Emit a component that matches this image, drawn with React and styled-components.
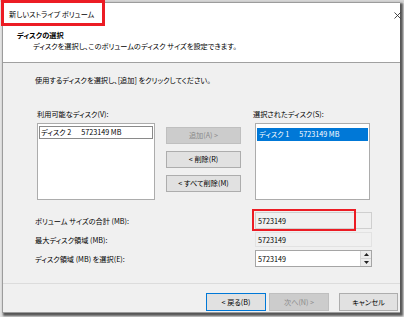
import React from "react";
import styled, { createGlobalStyle } from "styled-components";

const Global = createGlobalStyle`
  body {
    margin: 0;
    background: #e4e4e4;
    font-family: "Noto Sans CJK JP", "Noto Sans", sans-serif;
    font-size: 7.2px;
    font-feature-settings: "palt";
    color: #000;
  }
`;

const Page = styled.div`
  position: relative;
  width: 404px;
  height: 317px;
  overflow: hidden;
  padding: 2px 0 0 2px;
  box-sizing: border-box;
  background: linear-gradient(180deg, #d6d6d6 0, #d6d6d6 2px, #e4e4e4 2px);
`;

const Window = styled.div`
  position: relative;
  width: 398px;
  height: 311px;
  box-sizing: border-box;
  border: 1px solid #9c9c9c;
  border-right: none;
  background: #f0f0f0;
  display: flex;
  flex-direction: column;
  box-shadow: 2px 2px 2px 1px rgba(40, 40, 40, 0.75);
`;

const Header = styled.div`
  position: relative;
  height: 60px;
  box-sizing: border-box;
  background: #fff;
  border-bottom: 1px solid #a0a0a0;
  padding: 5px 0 0 6px;
  line-height: 12px;
  flex-shrink: 0;
`;

const Title = styled.div`
  height: 12px;
`;

const Heading = styled.div`
  margin: 9px 0 0 8px;
  font-weight: bold;
`;

const Sub = styled.div`
  margin-left: 24px;
  line-height: 11px;
`;

const Close = styled.svg`
  position: absolute;
  right: -1px;
  top: 9px;
`;

const Annotation = styled.div`
  position: absolute;
  left: ${(p) => p.x}px;
  top: ${(p) => p.y}px;
  width: ${(p) => p.w}px;
  height: ${(p) => p.h}px;
  box-sizing: border-box;
  border: ${(p) => p.t}px solid #ec1c24;
  pointer-events: none;
`;

const Body = styled.div`
  flex: 1;
  padding: 11px 0 0 32px;
  line-height: 12px;
`;

const Lists = styled.div`
  display: grid;
  grid-template-columns: 118px 75px 118px;
  grid-template-rows: 12px 77px;
  column-gap: 11px;
  row-gap: 3px;
  margin: 22px 0 0 2px;
`;

const Label = styled.div`
  grid-column: ${(p) => p.col};
  white-space: nowrap;
`;

const ListBox = styled.div`
  grid-column: ${(p) => p.col};
  grid-row: 2;
  background: #fff;
  border: 1px solid #acacac;
  box-sizing: border-box;
  padding: 1px;
  ${(p) => (p.col === 3 ? "margin-left: 3px;" : "")}
`;

const Item = styled.div`
  display: flex;
  height: 11px;
  line-height: 11px;
  padding-left: 1px;
  margin-top: ${(p) => (p.selected ? 3 : 1)}px;
  border: 1px solid ${(p) => (p.selected ? "#0078d7" : "#8a8a8a")};
  background: ${(p) => (p.selected ? "#0078d7" : "#fff")};
  color: ${(p) => (p.selected ? "#fff" : "#000")};
  white-space: nowrap;
  box-sizing: content-box;
`;

const Size = styled.span`
  margin-left: 10px;
`;

const Buttons = styled.div`
  grid-column: 2;
  grid-row: 2;
  display: flex;
  flex-direction: column;
  gap: 7px;
  padding-top: 4px;
`;

const Button = styled.button`
  width: ${(p) => p.w || 75}px;
  height: ${(p) => p.h || 17}px;
  padding: 0;
  font: inherit;
  font-feature-settings: "palt";
  line-height: 11px;
  box-sizing: border-box;
  background: ${(p) => (p.disabled ? "#cccccc" : "#e1e1e1")};
  border: 1px solid
    ${(p) => (p.primary ? "#0078d7" : p.disabled ? "#bfbfbf" : "#adadad")};
  color: ${(p) => (p.disabled ? "#8a8a8a" : "#000")};
`;

const Form = styled.div`
  display: grid;
  grid-template-columns: 220px 117px;
  grid-template-rows: 17px 15px 17px;
  row-gap: 3px;
  margin-top: 12px;
  align-items: center;
`;

const Field = styled.div`
  height: 100%;
  box-sizing: border-box;
  display: flex;
  align-items: center;
  padding-left: 2px;
  background: ${(p) => (p.editable ? "#fff" : "#f0f0f0")};
  border: 1px solid ${(p) => (p.editable ? "#a5a5a5" : p.soft ? "#e2e2e2" : "#cfcfcf")};
  position: relative;
`;

const Spin = styled.div`
  position: absolute;
  right: 0;
  top: 0;
  bottom: 0;
  width: 10px;
  display: flex;
  flex-direction: column;
  border-left: 1px solid #d4d4d4;
`;

const SpinHalf = styled.div`
  flex: 1;
  display: flex;
  align-items: center;
  justify-content: center;
  background: #ececec;
  & + & {
    border-top: 1px solid #d4d4d4;
  }
`;

const Footer = styled.div`
  height: 29px;
  border-top: 1px solid #dcdcdc;
  display: flex;
  justify-content: flex-end;
  align-items: flex-start;
  padding: 9px 2px 0 0;
  box-sizing: border-box;
  flex-shrink: 0;
`;

const Gap = styled.div`
  width: ${(p) => p.w}px;
`;

const Tri = ({ up }) => (
  <svg width="5" height="3" viewBox="0 0 5 3">
    <path d={up ? "M0 3 L2.5 0 L5 3 Z" : "M0 0 L2.5 3 L5 0 Z"} fill="#222" />
  </svg>
);

export default function App() {
  return (
    <>
      <Global />
      <Page>
        <Window>
          <Header>
            <Title>新しいストライプ ボリューム</Title>
            <Heading>ディスクの選択</Heading>
            <Sub>ディスクを選択し、このボリュームのディスク サイズを設定できます。</Sub>
            <Close width="7" height="7" viewBox="0 0 7 7">
              <path d="M0.5 0.5 L6.5 6.5 M6.5 0.5 L0.5 6.5" stroke="#333" strokeWidth="0.9" />
            </Close>
          </Header>
          <Body>
            <div>使用するディスクを選択し、[追加] をクリックしてください。</div>
            <Lists>
              <Label col={1}>利用可能なディスク(V):</Label>
              <Label col={3} style={{ marginLeft: 1 }}>選択されたディスク(S):</Label>
              <ListBox col={1}>
                <Item>
                  ディスク 2<Size>5723149 MB</Size>
                </Item>
              </ListBox>
              <Buttons>
                <Button disabled>追加(A) &gt;</Button>
                <Button>&lt; 削除(R)</Button>
                <Button>&lt; すべて削除(M)</Button>
              </Buttons>
              <ListBox col={3}>
                <Item selected>
                  ディスク 1<Size>5723149 MB</Size>
                </Item>
              </ListBox>
            </Lists>
            <Form>
              <div>ボリューム サイズの合計 (MB):</div>
              <Field>5723149</Field>
              <div>最大ディスク領域 (MB):</div>
              <Field soft>5723149</Field>
              <div>ディスク領域 (MB) を選択(E):</div>
              <Field editable>
                5723149
                <Spin>
                  <SpinHalf>
                    <Tri up />
                  </SpinHalf>
                  <SpinHalf>
                    <Tri />
                  </SpinHalf>
                </Spin>
              </Field>
            </Form>
          </Body>
          <Footer>
            <Button primary w={60} h={18}>&lt; 戻る(B)</Button>
            <Gap w={3} />
            <Button disabled w={60} h={18}>次へ(N) &gt;</Button>
            <Gap w={10} />
            <Button w={59} h={18}>キャンセル</Button>
          </Footer>
        </Window>
        <Annotation x={1} y={0} w={104} h={26} t={3} />
        <Annotation x={252} y={209} w={104} h={22} t={2} />
      </Page>
    </>
  );
}
